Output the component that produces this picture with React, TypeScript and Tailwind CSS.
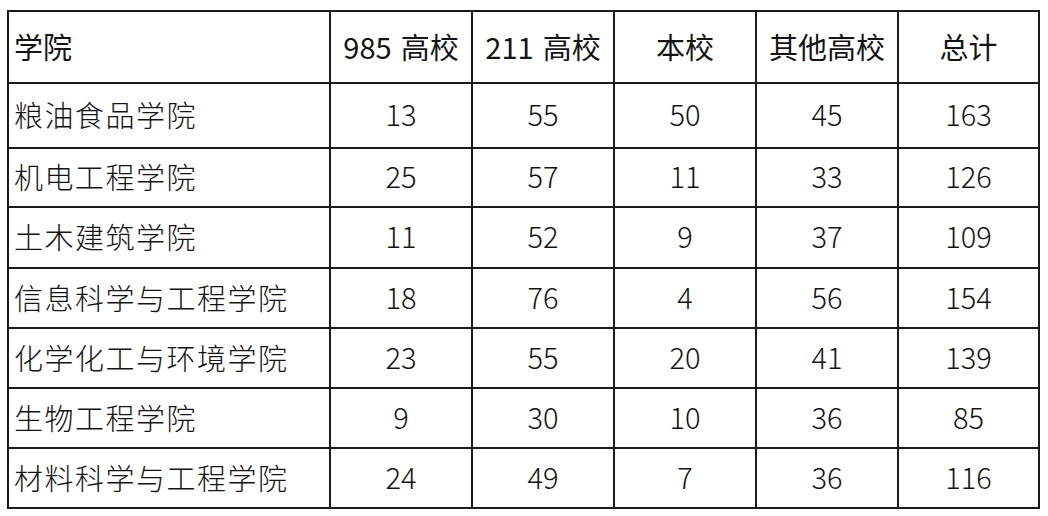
import React from "react";

const rows: { name: string; v: (string | number)[]; h: string }[] = [
  { name: "粮油食品学院", v: [13, 55, 50, 45, 163], h: "h-[65px]" },
  { name: "机电工程学院", v: [25, 57, 11, 33, 126], h: "h-[59px]" },
  { name: "土木建筑学院", v: [11, 52, 9, 37, 109], h: "h-[61px]" },
  { name: "信息科学与工程学院", v: [18, 76, 4, 56, 154], h: "h-[60px]" },
  { name: "化学化工与环境学院", v: [23, 55, 20, 41, 139], h: "h-[60px]" },
  { name: "生物工程学院", v: [9, 30, 10, 36, 85], h: "h-[60px]" },
  { name: "材料科学与工程学院", v: [24, 49, 7, 36, 116], h: "h-[60px]" },
];

const headers: React.ReactNode[] = [
  <>
    985<span className="ml-[9px]">高校</span>
  </>,
  <>
    211<span className="ml-[9px]">高校</span>
  </>,
  "本校",
  "其他高校",
  "总计",
];

export default function App() {
  return (
    <div
      className="w-[1048px] h-[516px] bg-white pt-[10px] pl-[7px] text-[#141414]"
      style={{ fontFamily: '"Noto Sans CJK SC", "Noto Sans", sans-serif' }}
    >
      <table className="table-fixed border-collapse border-2 border-[#1c1c1c] w-[1033px] text-[29px] leading-none font-light">
        <colgroup>
          <col className="w-[322px]" />
          <col className="w-[142px]" />
          <col className="w-[142px]" />
          <col className="w-[142px]" />
          <col className="w-[142px]" />
          <col className="w-[141px]" />
        </colgroup>
        <thead>
          <tr className="h-[72px]">
            <th className="border-2 border-[#1c1c1c] text-left font-normal pl-[5px] pb-[2px]">学院</th>
            {headers.map((h, i) => (
              <th key={i} className="border-2 border-[#1c1c1c] text-center font-normal pb-[2px] whitespace-nowrap">
                {h}
              </th>
            ))}
          </tr>
        </thead>
        <tbody>
          {rows.map((r) => (
            <tr key={r.name} className={r.h}>
              <td className="border-2 border-[#1c1c1c] text-left pl-[5px] tracking-[1.5px] pb-[2px]">{r.name}</td>
              {r.v.map((x, i) => (
                <td key={i} className="border-2 border-[#1c1c1c] text-center pb-[4px]">
                  {x}
                </td>
              ))}
            </tr>
          ))}
        </tbody>
      </table>
    </div>
  );
}
